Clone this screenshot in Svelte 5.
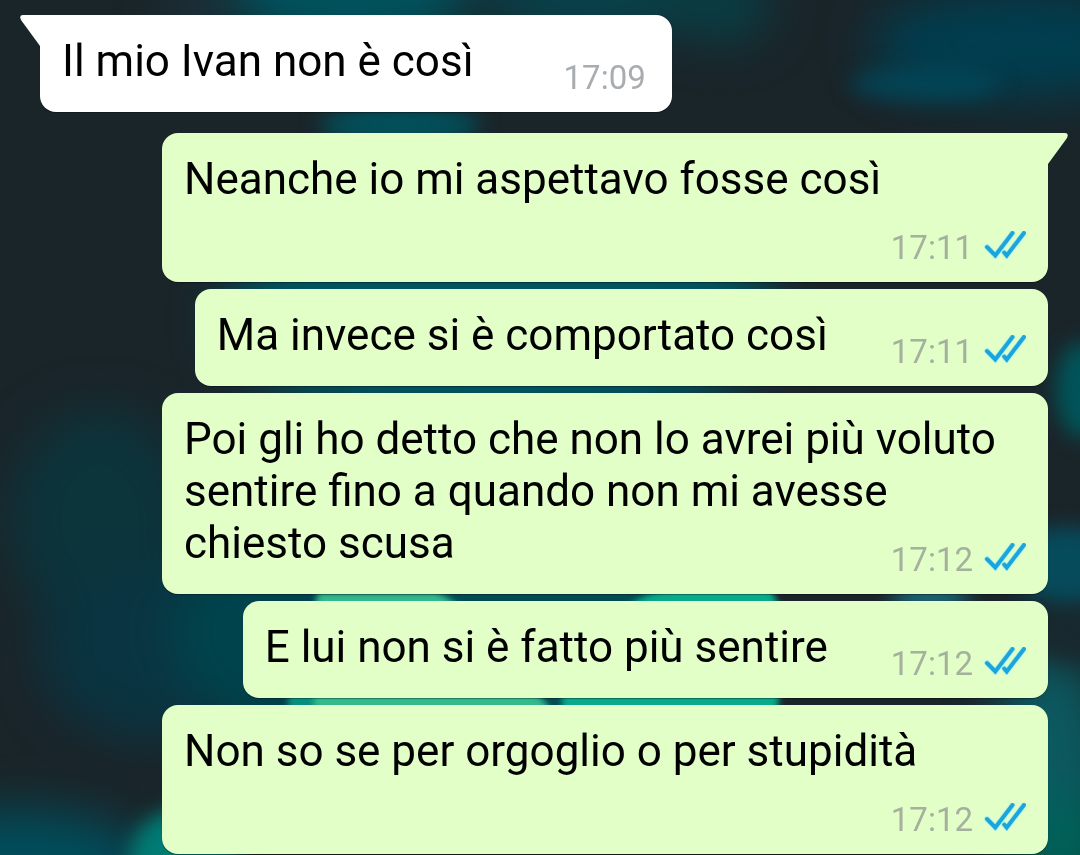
<script>
  const messages = [
    { text: 'Il mio Ivan non è così', time: '17:09', sent: false, tail: true },
    { text: 'Neanche io mi aspettavo fosse così', time: '17:11', sent: true, tail: true },
    { text: 'Ma invece si è comportato così', time: '17:11', sent: true, tail: false },
    { text: 'Poi gli ho detto che non lo avrei più voluto sentire fino a quando non mi avesse chiesto scusa', time: '17:12', sent: true, tail: false },
    { text: 'E lui non si è fatto più sentire', time: '17:12', sent: true, tail: false },
    { text: 'Non so se per orgoglio o per stupidità', time: '17:12', sent: true, tail: false }
  ];
</script>

<main class="chat">
  <svg class="wallpaper" viewBox="0 0 1080 855" preserveAspectRatio="none" aria-hidden="true">
    <defs>
      <filter id="wide" x="-60%" y="-60%" width="220%" height="220%" color-interpolation-filters="sRGB"><feGaussianBlur stdDeviation="24" /></filter>
      <filter id="soft" x="-60%" y="-60%" width="220%" height="220%" color-interpolation-filters="sRGB"><feGaussianBlur stdDeviation="10" /></filter>
      <filter id="edge" x="-20%" y="-20%" width="140%" height="140%" color-interpolation-filters="sRGB"><feGaussianBlur stdDeviation="3" /></filter>
    </defs>
    <rect width="1080" height="855" fill="#1a252a" />
    <g filter="url(#wide)">
      <ellipse cx="195" cy="10" rx="30" ry="24" fill="#1d3440" />
      <ellipse cx="350" cy="-10" rx="120" ry="60" fill="#00525d" />
      <ellipse cx="590" cy="-5" rx="110" ry="40" fill="#07434d" />
      <ellipse cx="720" cy="5" rx="50" ry="36" fill="#083f46" />
      <ellipse cx="1020" cy="45" rx="150" ry="52" fill="#003e50" />
      <ellipse cx="500" cy="320" rx="280" ry="110" fill="#00545e" />
      <ellipse cx="100" cy="520" rx="90" ry="110" fill="#0c343b" />
      <ellipse cx="150" cy="650" rx="110" ry="90" fill="#0a3441" />
      <ellipse cx="360" cy="630" rx="190" ry="130" fill="#00434c" />
      <ellipse cx="560" cy="640" rx="160" ry="120" fill="#004c53" />
      <ellipse cx="20" cy="865" rx="130" ry="55" fill="#004d5b" />
      <ellipse cx="1050" cy="770" rx="60" ry="120" fill="#0c5960" />
      <ellipse cx="1060" cy="845" rx="60" ry="50" fill="#006159" />
    </g>
    <g filter="url(#soft)">
      <ellipse cx="400" cy="125" rx="80" ry="18" fill="#00525d" />
      <ellipse cx="925" cy="84" rx="75" ry="18" fill="#00485b" opacity="0.8" />
      <ellipse cx="1082" cy="390" rx="26" ry="48" fill="#00555a" />
      <ellipse cx="1068" cy="565" rx="60" ry="38" fill="#064b5c" />
      <ellipse cx="930" cy="598" rx="40" ry="12" fill="#197380" />
      <ellipse cx="1070" cy="635" rx="34" ry="24" fill="#18292f" />
      <ellipse cx="185" cy="860" rx="56" ry="52" fill="#007b74" />
    </g>
    <g filter="url(#edge)">
      <rect x="288" y="680" width="70" height="60" rx="18" fill="#06907b" />
      <path d="M318 592H435Q460 600 480 635L548 705V730H318Q304 650 318 592Z" fill="#32b98d" />
      <path d="M630 605Q650 590 680 588H766Q782 592 782 650T770 730H562V690Z" fill="#08aa8b" />
    </g>
  </svg>

  <ol class="messages">
    {#each messages as message}
      <li class="bubble" class:sent={message.sent} class:received={!message.sent} class:tailed={message.tail}>
        {#if message.tail}
          <svg class="tail" viewBox="0 0 20 31" aria-hidden="true">
            <path d="M0 0H17Q21 0 19 5L0 31Z" />
          </svg>
        {/if}
        <span class="text">{message.text}</span>
        <span class="meta">
          <time>{message.time}</time>
          {#if message.sent}
            <svg class="ticks" viewBox="0 0 42 28" role="img" aria-label="Letto">
              <g fill="none">
                <path class="halo" d="M3 16L11.300 24.500L28.500 2M20.200 21.500L22.700 24.500L40 2" />
                <path class="tick" d="M3 16L11.300 24.500L28.500 2M20.200 21.500L22.700 24.500L40 2" />
              </g>
            </svg>
          {/if}
        </span>
      </li>
    {/each}
  </ol>
</main>

<style>
  :global(body) {
    margin: 0;
    background: #1a252a;
  }

  .chat {
    position: relative;
    min-height: 100vh;
    box-sizing: border-box;
    overflow: hidden;
    font-family: Roboto, sans-serif;
  }

  .wallpaper {
    position: absolute;
    inset: 0;
    width: 100%;
    height: 100%;
  }

  .messages {
    position: relative;
    display: flex;
    flex-direction: column;
    gap: 7px;
    margin: 0;
    padding: 15px 32px 1px 40px;
    list-style: none;
  }

  .bubble {
    position: relative;
    display: flow-root;
    box-sizing: border-box;
    max-width: calc(100% - 122px);
    padding: 20px 22px 14px;
    border-radius: 16px;
    box-shadow: 0 1px 1px rgba(0, 0, 0, 0.35);
    color: #000;
    font-size: 44px;
    line-height: 52px;
  }

  .sent {
    align-self: flex-end;
    background: #e1ffc7;
  }

  .received {
    align-self: flex-start;
    margin-bottom: 14px;
    padding-right: 26px;
    background: #fff;
  }

  .sent.tailed {
    border-top-right-radius: 0;
  }

  .received.tailed {
    border-top-left-radius: 0;
  }

  .tail {
    position: absolute;
    top: 0;
    left: 100%;
    width: 20px;
    height: 31px;
    fill: #e1ffc7;
  }

  .received .tail {
    right: 100%;
    left: auto;
    fill: #fff;
    transform: scaleX(-1);
  }

  .meta {
    float: right;
    display: flex;
    align-items: flex-start;
    gap: 11px;
    height: 40px;
    margin-left: 63px;
    padding-top: 23px;
    color: #a5b09f;
    font-size: 33px;
    line-height: 40px;
  }

  .received .meta {
    margin-left: 90px;
    color: #a9adb0;
  }

  .ticks {
    width: 42px;
    height: 28px;
    margin-top: 3px;
  }

  .halo {
    stroke: #b5f4e3;
    stroke-width: 6px;
    stroke-linecap: round;
  }

  .tick {
    stroke: #1ca5dc;
    stroke-width: 4px;
    stroke-linecap: round;
  }
</style>
